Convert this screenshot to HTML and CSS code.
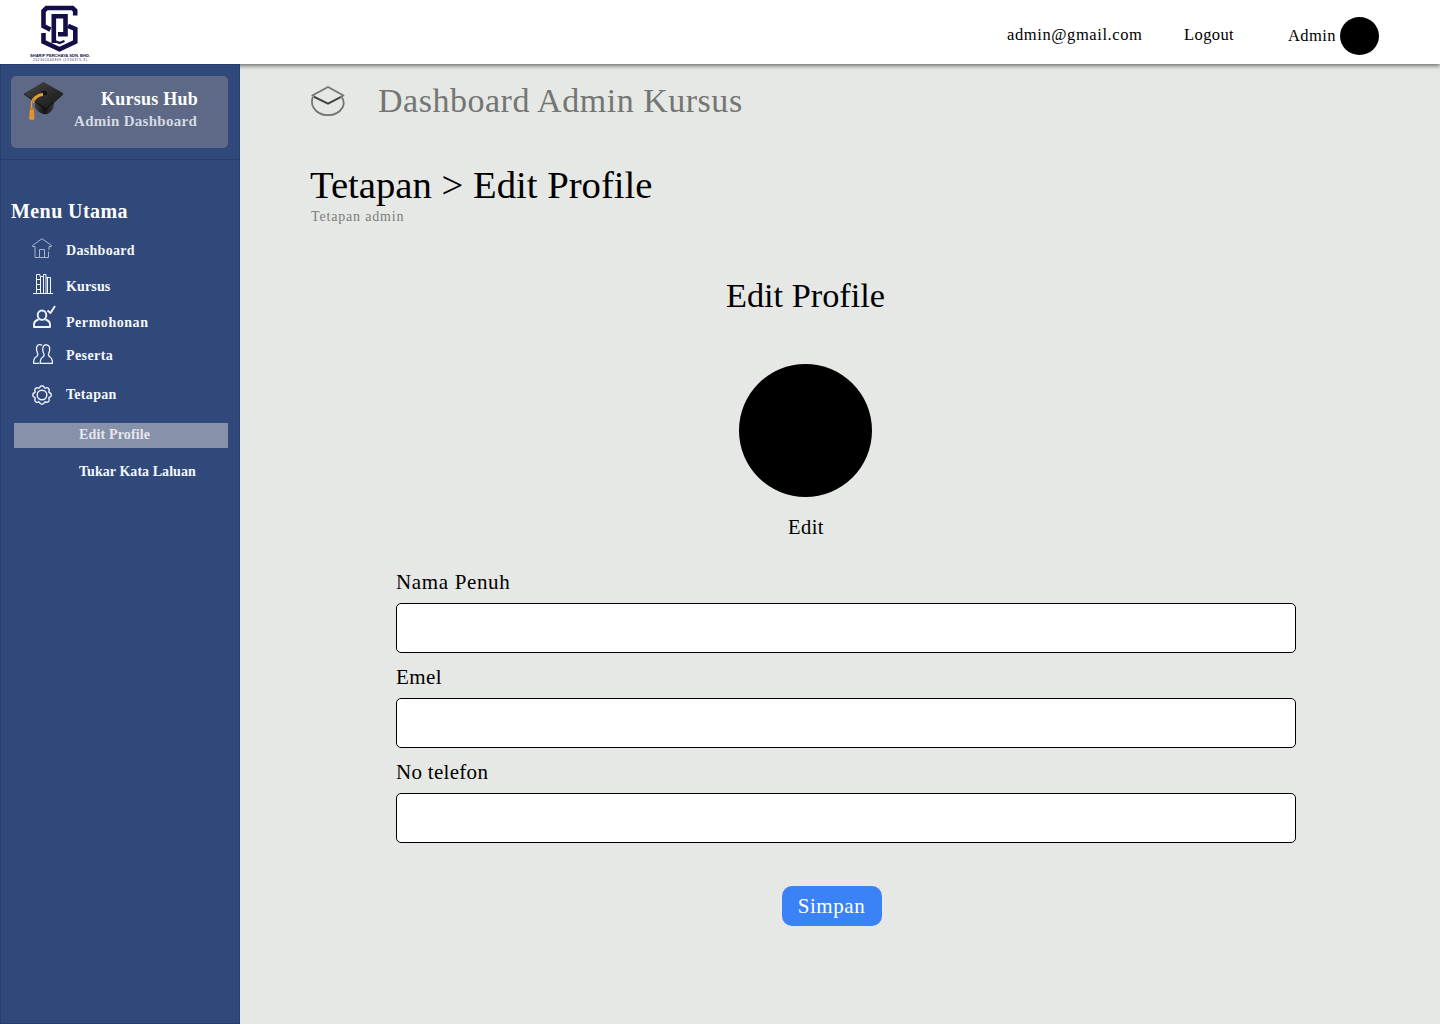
FILE: index.html
```html
<!DOCTYPE html>
<html lang="ms">
<head>
<meta charset="utf-8">
<title>Kursus Hub - Edit Profile</title>
<link rel="stylesheet" href="styles.css">
</head>
<body>
<header class="topbar">
  <svg class="logo" viewBox="0 0 80 64" width="80" height="64">
    <g fill="none" stroke="#130d48" stroke-width="4.6">
      <path d="M55.200 15.500V10.500L52.500 8H26.500l-3 3V26l7 3.600"/>
      <path d="M33.800 43V16.300H45.500V34.300H38"/>
      <path d="M48 25.800l7.300 3.200V41.800L39.500 49.300 23.500 41.800V33"/>
      <path d="M33.500 40.500l6 2.500 5-2" stroke-width="2.400"/>
    </g>
    <text class="logo-name" x="10" y="57" textLength="60" lengthAdjust="spacingAndGlyphs">SHARIF PERCHAYA SDN. BHD.</text>
    <text class="logo-number" x="13" y="61" textLength="54" lengthAdjust="spacing">202301040909 (1534375-X)</text>
  </svg>
  <nav class="account">
    <span class="email">admin@gmail.com</span>
    <span class="logout">Logout</span>
    <span class="user">Admin</span>
    <span class="user-avatar"></span>
  </nav>
</header>
<div class="layout">
  <aside class="sidebar">
    <div class="brand-area">
      <div class="brand">
        <svg class="brand-cap" width="42" height="42" viewBox="0 0 42 42">
          <defs>
            <linearGradient id="board" x1="0" y1="0" x2="1" y2="1"><stop offset="0" stop-color="#444"/><stop offset="1" stop-color="#171717"/></linearGradient>
            <linearGradient id="cap" x1="0" y1="0" x2="1" y2="0"><stop offset="0" stop-color="#3e3e3e"/><stop offset=".5" stop-color="#161616"/><stop offset="1" stop-color="#3a3a3a"/></linearGradient>
          </defs>
          <path d="M12 22v5c2 5 8 8 12 7 4-1 7-6 7-10v-6z" fill="url(#cap)"/>
          <path d="M1 13.500 20.500 2 40 13 23 28.500z" fill="url(#board)"/>
          <path d="M1 13.500 23 28.500 40 13v1.500L23 30 1 14.500z" fill="#111"/>
          <ellipse cx="21" cy="13" rx="3" ry="2.200" fill="#151515"/>
          <path d="M20 13.500c-6 1-11 5-11.500 9v6M20 15c-5 1-9 4-9.500 8" fill="none" stroke="#e6a12f" stroke-width="1.400"/>
          <path d="M7 28.500q2-2 4 0l.5 10.500q-2.500 2-5.500 0z" fill="#e19528"/>
          <path d="M6.500 29h5" stroke="#a96918"/>
        </svg>
        <div class="brand-text">
          <strong class="brand-name">Kursus Hub</strong>
          <span class="brand-sub">Admin Dashboard</span>
        </div>
      </div>
    </div>
    <h2 class="menu-title">Menu Utama</h2>
    <ul class="menu">
      <li class="item">
        <svg class="icon icon-home" width="20" height="20" viewBox="0 0 20 20"><path d="M3 8.500H.5v-1L10 .7l9.500 6.800v1H17V12M16.500 13.500v6H3V8.500M7.500 19.500v-8h5v8"/></svg>
        <span class="dashboard">Dashboard</span>
      </li>
      <li class="item">
        <svg class="icon icon-books" width="20" height="20" viewBox="0 0 20 20"><path d="M0 19.500h20M3.500 19V.5H7M3.500 5.500h4M3.500 10.500h4M3.500 15.500h4M7.500 19V2.500h3V19M10.500 2.500V.5H13v19M7 .5v2M13 3.500h4.500v16M14.500 4v15"/></svg>
        <span class="kursus">Kursus</span>
      </li>
      <li class="item item-request">
        <svg class="icon icon-request" width="24" height="24" viewBox="0 0 24 24"><ellipse cx="9" cy="10.200" rx="4.300" ry="4.700"/><path d="M5.500 14.500C2.500 15.500 1 17 1 19.500V22h16v-2.500c0-2.500-1.500-4-4.500-5"/><path d="M14.500 5.500 17.500 8 22 1"/></svg>
        <span class="permohonan">Permohonan</span>
      </li>
      <li class="item item-people">
        <svg class="icon icon-people" width="20" height="20" viewBox="0 0 20 20"><path d="M9 1.500C8 .4 5 .2 4 2.200c-.8 2.300-.5 4.800.5 6.800.7 2-.1 3.300-1.500 4C1 14 .6 16 .6 19.300h5.600"/><path d="M10.500 9C9.500 6.500 9.500 4 10.500 2.200 11.800.2 15 .3 16.200 2.500c.8 2.300.6 4.500-.4 6.500-.7 1.700-.4 3 1.200 4 2 1.200 2.500 3 2.500 6.300H7.200c0-3.300.8-5.300 2.700-6.300 1.300-.9 1.500-2.400.6-4z"/></svg>
        <span class="peserta">Peserta</span>
      </li>
      <li class="item item-settings">
        <svg class="icon icon-gear" width="20" height="20" viewBox="0 0 20 20"><circle cx="10" cy="10" r="4.800"/><path d="M7.500 2.900Q8 .7 10 .7t2.500 2.200l.8.300q2-1.200 3.300.2t.2 3.300l.3.800q2.200.5 2.200 2.500t-2.200 2.500l-.3.800q1.200 2-.2 3.300t-3.300.2l-.8.300Q12 19.300 10 19.300t-2.500-2.200l-.8-.3q-2 1.200-3.300-.2t-.2-3.300l-.3-.8Q.7 12 .7 10t2.200-2.500l.3-.8q-1.200-2 .2-3.300t3.300-.2z"/></svg>
        <span class="tetapan">Tetapan</span>
      </li>
    </ul>
    <ul class="submenu">
      <li class="sub active">Edit Profile</li>
      <li class="sub">Tukar Kata Laluan</li>
    </ul>
  </aside>
  <main class="main">
    <div class="page-head">
      <svg class="head-icon" width="34" height="32" viewBox="0 0 34 32" fill="none" stroke="#747674" stroke-width="1.800" stroke-linejoin="round">
        <path d="M1.300 10.500 17 2l15.500 8.500L17 18.500z"/>
        <path d="M1.800 12C.7 15 .8 19.500 2.500 22.500 5.500 27.500 11 30.200 17 30.200s11.500-2.700 14.500-7.700c1.700-3 1.600-7.500-.7-10.200"/>
        <path d="m3 12 14 6.700 12.500-6.500" stroke="#414341"/>
      </svg>
      <span class="head-title">Dashboard Admin Kursus</span>
    </div>
    <h1 class="title">Tetapan &gt; Edit Profile</h1>
    <p class="subtitle">Tetapan admin</p>
    <div class="content">
      <section class="profile">
        <h2 class="profile-title">Edit Profile</h2>
        <div class="photo"></div>
        <span class="edit">Edit</span>
      </section>
      <form class="form">
        <label class="field"><span class="label-name">Nama Penuh</span><input class="input" type="text"></label>
        <label class="field"><span class="label-email">Emel</span><input class="input" type="text"></label>
        <label class="field"><span class="label-phone">No telefon</span><input class="input" type="text"></label>
        <button class="save" type="button">Simpan</button>
      </form>
    </div>
  </main>
</div>
</body>
</html>
```
FILE: styles.css
```css
* { box-sizing: border-box; }
body {
  margin: 0;
  height: 1024px;
  overflow: hidden;
  display: flex;
  flex-direction: column;
  background: #e6e8e5;
  color: #000;
  font-family: "Liberation Serif", serif;
}
h1, h2, p, ul { margin: 0; padding: 0; }
ul { list-style: none; }

.topbar {
  height: 64px;
  flex: none;
  display: flex;
  justify-content: space-between;
  padding: 0 61px 0 20px;
  background: #fff;
  box-shadow: 0 2px 4px rgba(0, 0, 0, .5);
}
.logo { display: block; }
.logo-name { font: bold 4.3px "Liberation Sans", sans-serif; fill: #130d48; }
.logo-number { font: 3px "Liberation Sans", sans-serif; fill: #130d48; }
.account { display: flex; font-size: 16.5px; line-height: 20px; padding-top: 17px; white-space: nowrap; }
.email { width: 177px; padding-top: 8px; letter-spacing: .6px; }
.logout { width: 104px; padding-top: 8px; letter-spacing: .4px; }
.user { width: 52px; padding-top: 9px; letter-spacing: .4px; }
.user-avatar { width: 39px; height: 38px; border-radius: 50%; background: #000; }

.layout { flex: 1; display: flex; }
.sidebar {
  position: relative;
  width: 240px;
  flex: none;
  border: 1px solid #273f6b;
  background: #30497a;
  color: #f5f7fb;
  font-weight: bold;
}
.brand-area { height: 95px; padding: 11px 11px 0 10px; border-bottom: 1px solid #273f6b; }
.brand { display: flex; height: 72px; border-radius: 5px; background: #5d6987; }
.brand-cap { margin: 4px 0 0 12px; flex: none; }
.brand-text { flex: 1; display: flex; flex-direction: column; align-items: flex-end; padding: 12px 30px 0 0; }
.brand-name { color: #fff; font-size: 18px; line-height: 22px; letter-spacing: .25px; }
.brand-sub { margin-right: 1px; color: #d5dae4; font-size: 15px; line-height: 22px; letter-spacing: .28px; white-space: nowrap; }
.menu-title { margin: 37px 0 0 10px; color: #fff; font-size: 20px; line-height: 28px; letter-spacing: .42px; }
.menu { padding: 13px 0 0 31px; font-size: 14px; line-height: 20px; }
.item { display: flex; height: 36px; }
.item span { padding-top: 3px; margin-left: auto; width: 173px; }
.item-request { height: 33px; }
.item-people { height: 39px; }
.item-settings { height: 41px; }
.icon { fill: none; stroke: #f2f5fa; stroke-width: 1.300; stroke-linejoin: round; flex: none; }
.icon-home { stroke: #a9b5cb; stroke-width: 1; }
.icon-books { margin-left: 1px; stroke-width: 1; }
.icon-request { margin: -5px 0 0 1px; stroke-width: 1.900; }
.icon-people { margin: 1px 0 0 1px; }
.icon-gear { margin-top: 3px; stroke-width: 1.400; }
.dashboard { letter-spacing: .3px; }
.kursus { letter-spacing: .15px; }
.permohonan { letter-spacing: .55px; }
.peserta { letter-spacing: .42px; }
.tetapan { letter-spacing: .3px; }
.submenu { display: flex; flex-direction: column; gap: 12px; padding: 0 11px 0 13px; font-size: 14px; line-height: 20px; }
.sub { height: 25px; padding: 2px 0 0 65px; letter-spacing: .05px; }
.active { background: #8791a9; color: #e4e7ed; letter-spacing: .15px; }

.main { flex: 1; padding: 14px 144px 0 70px; }
.page-head { display: flex; height: 44px; }
.head-icon { margin: 7px 33px 0 1px; }
.head-title { padding-top: 1px; color: #747674; font-size: 34px; line-height: 44px; letter-spacing: .52px; }
.title { margin-top: 41px; font-size: 38.700px; font-weight: normal; line-height: 44px; }
.subtitle { padding: 1px 0 0 1px; color: #7b7d7b; font-size: 14px; line-height: 18px; letter-spacing: .82px; }
.content { margin: 47px 0 0 86px; }
.profile { width: 819px; display: flex; flex-direction: column; align-items: center; }
.profile-title { font-size: 34.300px; font-weight: normal; line-height: 44px; }
.photo { width: 133px; height: 133px; margin: 47px 0 17px; border-radius: 50%; background: #000; }
.edit { padding-left: 1px; font-size: 20.500px; line-height: 26px; letter-spacing: .45px; }
.form { display: flex; flex-direction: column; gap: 10px; padding-top: 28px; }
.field { display: flex; flex-direction: column; gap: 7px; font-size: 21px; line-height: 28px; }
.label-name { letter-spacing: .65px; }
.label-email { letter-spacing: .4px; }
.label-phone { letter-spacing: .3px; }
.input { width: 900px; height: 50px; border: 1px solid #000; border-radius: 5px; background: #fff; }
.save {
  width: 100px;
  height: 40px;
  margin: 33px 0 0 386px;
  padding: 0 1px 1px 0;
  border: 0;
  border-radius: 10px;
  background: #3b82f6;
  color: #fff;
  font: 21px/38px "Liberation Serif", serif;
  letter-spacing: .55px;
}
```
